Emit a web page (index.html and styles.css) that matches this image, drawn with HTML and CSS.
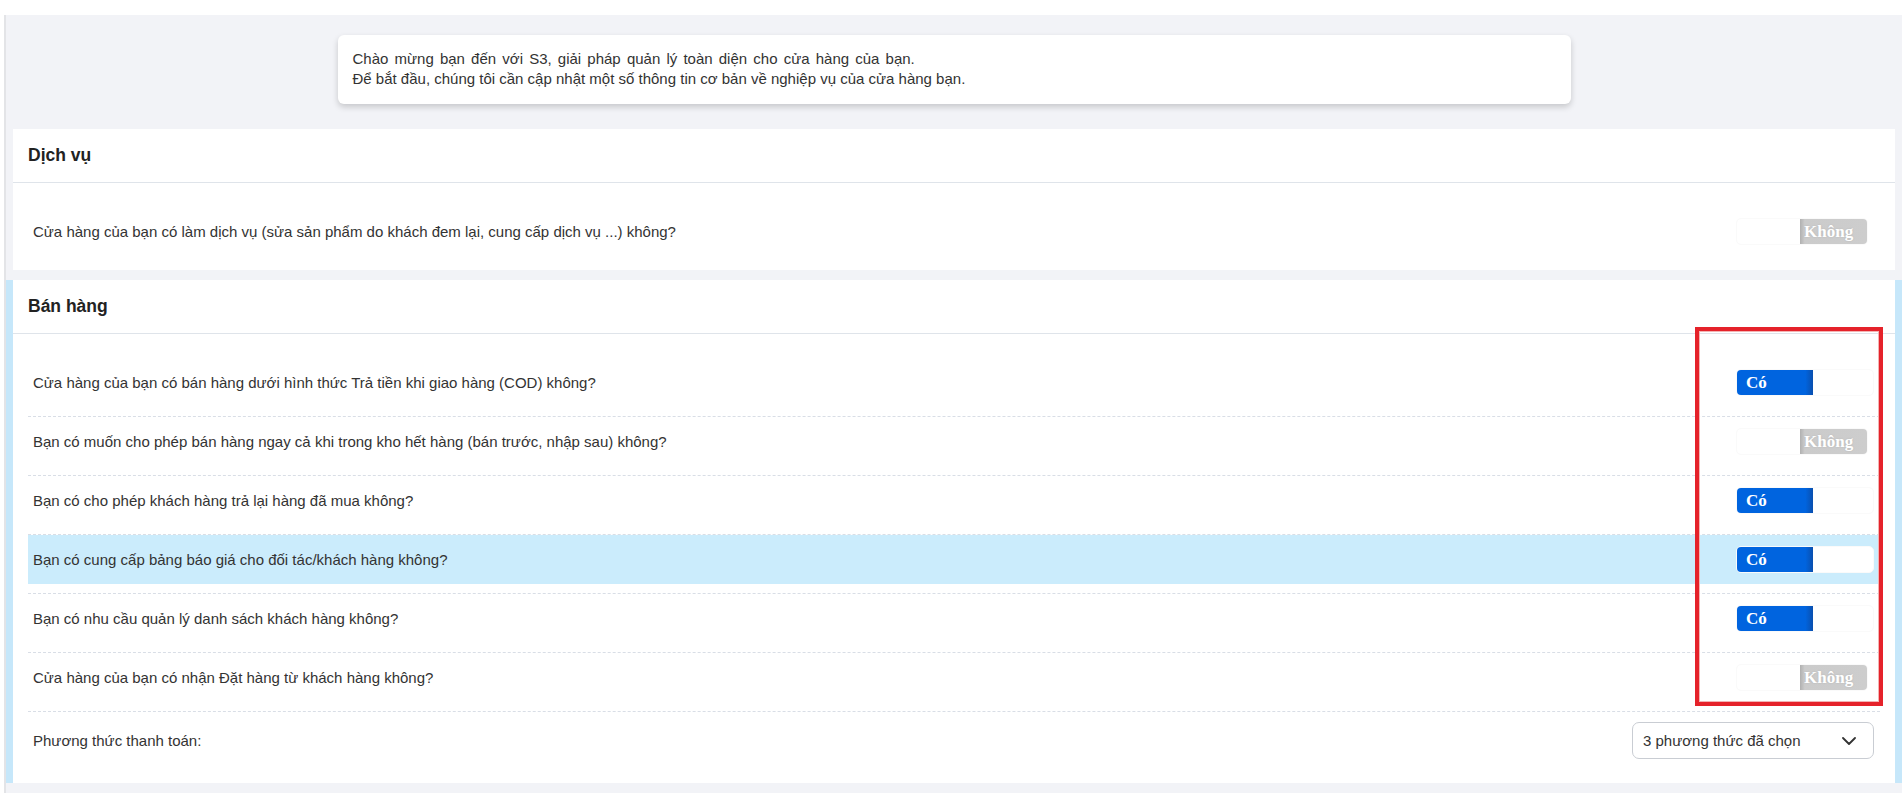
FILE: index.html
```html
<!DOCTYPE html>
<html lang="vi">
<head>
<meta charset="utf-8">
<title>S3 - Thiết lập cửa hàng</title>
<link rel="stylesheet" href="styles.css">
</head>
<body>
<div class="topbar"></div>
<div class="shell">
  <div class="welcome">
    <p class="wide">Chào mừng bạn đến với S3, giải pháp quản lý toàn diện cho cửa hàng của bạn.</p>
    <p>Để bắt đầu, chúng tôi cần cập nhật một số thông tin cơ bản về nghiệp vụ của cửa hàng bạn.</p>
  </div>

  <section class="section">
    <div class="card">
      <div class="card-head">Dịch vụ</div>
      <div class="card-body">
        <div class="row">
          <div class="row-inner">
            <span class="q">Cửa hàng của bạn có làm dịch vụ (sửa sản phẩm do khách đem lại, cung cấp dịch vụ ...) không?</span>
            <div class="answer"><span class="switch is-off"><span class="sw-label"></span><span class="sw-off">Không</span></span></div>
          </div>
        </div>
      </div>
    </div>
  </section>

  <section class="section active">
    <div class="card">
      <div class="card-head">Bán hàng</div>
      <div class="card-body">
        <div class="row">
          <div class="row-inner">
            <span class="q">Cửa hàng của bạn có bán hàng dưới hình thức Trả tiền khi giao hàng (COD) không?</span>
            <div class="answer"><span class="switch is-on"><span class="sw-on">Có</span><span class="sw-label"></span></span></div>
          </div>
        </div>
        <div class="row">
          <div class="row-inner">
            <span class="q">Bạn có muốn cho phép bán hàng ngay cả khi trong kho hết hàng (bán trước, nhập sau) không?</span>
            <div class="answer"><span class="switch is-off"><span class="sw-label"></span><span class="sw-off">Không</span></span></div>
          </div>
        </div>
        <div class="row">
          <div class="row-inner">
            <span class="q">Bạn có cho phép khách hàng trả lại hàng đã mua không?</span>
            <div class="answer"><span class="switch is-on"><span class="sw-on">Có</span><span class="sw-label"></span></span></div>
          </div>
        </div>
        <div class="row hl">
          <div class="row-inner">
            <span class="q">Bạn có cung cấp bảng báo giá cho đối tác/khách hàng không?</span>
            <div class="answer"><span class="switch is-on"><span class="sw-on">Có</span><span class="sw-label"></span></span></div>
          </div>
        </div>
        <div class="row">
          <div class="row-inner">
            <span class="q">Bạn có nhu cầu quản lý danh sách khách hàng không?</span>
            <div class="answer"><span class="switch is-on"><span class="sw-on">Có</span><span class="sw-label"></span></span></div>
          </div>
        </div>
        <div class="row">
          <div class="row-inner">
            <span class="q">Cửa hàng của bạn có nhận Đặt hàng từ khách hàng không?</span>
            <div class="answer"><span class="switch is-off"><span class="sw-label"></span><span class="sw-off">Không</span></span></div>
          </div>
        </div>
        <div class="row">
          <div class="row-inner pay">
            <span class="q">Phương thức thanh toán:</span>
            <div class="select">
              <span>3 phương thức đã chọn</span>
              <svg class="chev" width="14" height="8" viewBox="0 0 14 8"><path d="M1 1l6 6 6-6" fill="none" stroke="#333" stroke-width="1.8" stroke-linecap="round" stroke-linejoin="round"/></svg>
            </div>
          </div>
        </div>
      </div>
    </div>
  </section>
</div>
<div class="annot"></div>
</body>
</html>
```

FILE: styles.css
```css
* { box-sizing: border-box; }

html, body { margin: 0; padding: 0; }

body {
  background: #ffffff;
  font-family: "Liberation Sans", Arial, sans-serif;
  color: #333333;
  overflow: hidden;
}

.topbar { height: 15px; background: #ffffff; }

.shell {
  margin-left: 4px;
  border-left: 2px solid #e3e4e7;
  background: #f2f3f7;
  min-height: calc(100vh - 15px);
  padding-top: 20px;
  padding-bottom: 10px;
}

.welcome {
  width: 1233px;
  margin: 0 auto 25px;
  background: #ffffff;
  border-radius: 6px;
  box-shadow: 0 3px 6px rgba(0, 0, 0, 0.18);
  padding: 14px 15px 15px;
  font-size: 15px;
  line-height: 20px;
  color: #333333;
}

.welcome p { margin: 0; }
.welcome .wide { word-spacing: 2px; }

.section { padding: 0 7px; }
.section + .section { margin-top: 10px; }
.section.active { background: #c6e7fa; }

.card { background: #ffffff; }

.card-head {
  height: 54px;
  border-bottom: 1px solid #dfe4ea;
  padding: 0 15px;
  display: flex;
  align-items: center;
  font-weight: bold;
  font-size: 17.5px;
  color: #222222;
}

.card-body { padding: 24px 15px 5px; }

.row {
  border-bottom: 1px dashed #d9dee6;
  padding-bottom: 9px;
}
.row:last-child { border-bottom: none; }

.row-inner {
  display: flex;
  align-items: center;
  justify-content: space-between;
  padding: 11px 6px 11px 5px;
  min-height: 49px;
  font-size: 15px;
  color: #333333;
}

.row-inner.pay { padding-top: 10px; padding-bottom: 10px; }

.row.hl .row-inner { background: #cbecfc; }

.answer { width: 138px; display: flex; }

.switch {
  display: inline-flex;
  height: 27px;
  border: 1px solid #fafafa;
  border-radius: 5px;
  overflow: hidden;
  background: #ffffff;
  font-family: "Liberation Serif", "Times New Roman", serif;
  font-weight: bold;
  font-size: 17px;
  line-height: 25px;
  color: #ffffff;
}

.sw-on {
  width: 76px;
  padding-left: 9px;
  background: linear-gradient(to right, #0064df 0%, #0064df 90%, #0a4fae 100%);
}

.is-on .sw-label { width: 60px; }
.is-off .sw-label { width: 63px; }

.sw-off {
  width: 67px;
  padding-left: 4px;
  background: linear-gradient(to right, #b0b0b0 0%, #cbcbcb 7%, #cdcdcd 100%);
  text-shadow: 0 0 2px rgba(0, 0, 0, 0.12);
}

.select {
  width: 242px;
  height: 37px;
  border: 1px solid #c9cdd3;
  border-radius: 7px;
  display: flex;
  align-items: center;
  justify-content: space-between;
  padding: 0 17px 0 10px;
  font-size: 15px;
  color: #333333;
  background: #ffffff;
}

.chev { display: block; }

.annot {
  position: absolute;
  left: 1695px;
  top: 327px;
  width: 188px;
  height: 379px;
  border: 4px solid #e5222a;
  box-shadow: inset 0 0 0 1px #f3b3b3;
  pointer-events: none;
}
```
